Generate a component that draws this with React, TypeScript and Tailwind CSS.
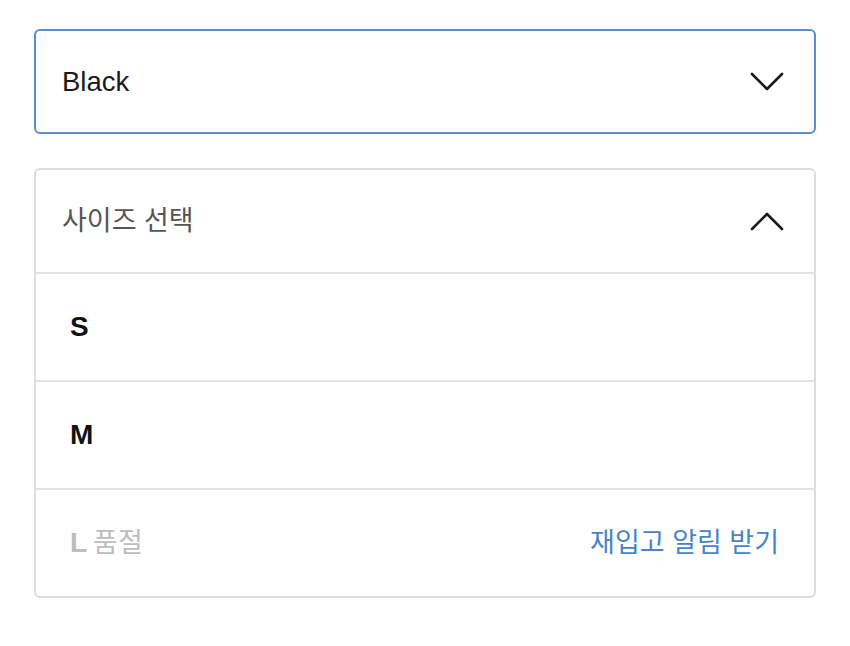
const SIZES = [
  { label: "S", soldOut: false },
  { label: "M", soldOut: false },
  { label: "L", soldOut: true },
];

const font = "font-['Liberation_Sans','Noto_Sans_CJK_KR',sans-serif]";

function Chevron({ up }: { up?: boolean }) {
  return (
    <svg width="34" height="19" viewBox="0 0 34 19" fill="none">
      <polyline
        points={up ? "2,17 17,2 32,17" : "2,2 17,17 32,2"}
        stroke="#1a1a1a"
        strokeWidth="2.6"
        strokeLinecap="round"
        strokeLinejoin="round"
      />
    </svg>
  );
}

export default function App() {
  return (
    <div className={`min-h-[646px] w-[850px] bg-white px-[34px] pt-[29px] ${font}`}>
      <div className="flex h-[105px] items-center justify-between rounded-[6px] border-2 border-[#5a8ed0] pl-[26px] pr-[30px]">
        <span className="text-[27.5px] text-[#1a1a1a]">Black</span>
        <Chevron />
      </div>

      <div className="mt-[34px] flex flex-col rounded-[6px] border-2 border-[#dddddd]">
        <div className="flex h-[102px] items-center justify-between pl-[26px] pr-[30px]">
          <span className="text-[27px] text-[#555555]">사이즈 선택</span>
          <Chevron up />
        </div>
        {SIZES.map((s) => (
          <div
            key={s.label}
            className="flex h-[108px] items-center justify-between border-t-2 border-[#e3e3e3] pl-[34px] pr-[35px]"
          >
            {s.soldOut ? (
              <>
                <span className="flex items-baseline gap-[6px] text-[#bdbdbd]">
                  <span className="text-[28px] font-bold">{s.label}</span>
                  <span className="text-[27px]">품절</span>
                </span>
                <button className="text-[27px] text-[#4a84c6]">재입고 알림 받기</button>
              </>
            ) : (
              <span className="text-[28px] font-bold text-[#111111]">{s.label}</span>
            )}
          </div>
        ))}
      </div>
    </div>
  );
}
